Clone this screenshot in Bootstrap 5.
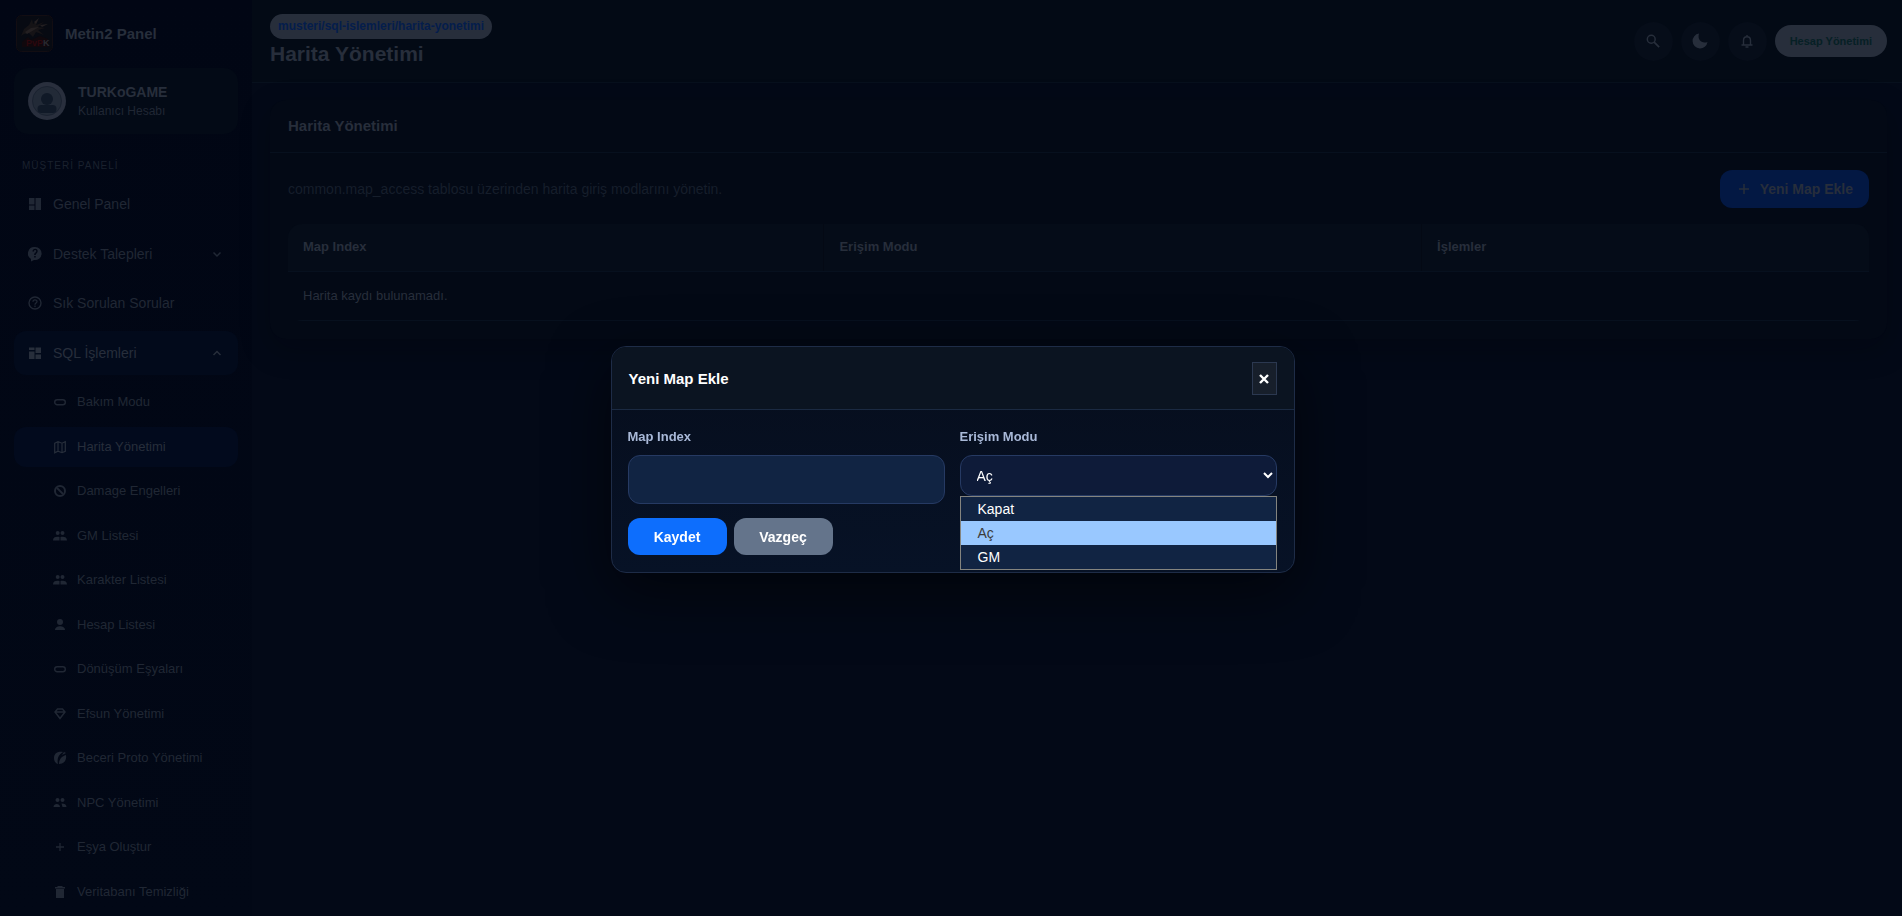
<!DOCTYPE html>
<html lang="tr" data-bs-theme="dark">
<head>
<meta charset="utf-8">
<meta name="viewport" content="width=device-width, initial-scale=1">
<title>Harita Yönetimi - Metin2 Panel</title>
<link href="https://cdn.jsdelivr.net/npm/bootstrap@5.3.0/dist/css/bootstrap.min.css" rel="stylesheet">
<style>
  :root { --ink: #272e3b; --ink-soft: #202734; --ink-faint: #161e2b; --rule: #07101e; }
  body { font-family: "Liberation Sans", Arial, sans-serif; font-size: 14px; line-height: 20px; color: var(--ink); background: #030917; overflow: hidden; }
  svg { display: block; fill: currentColor; }
  a { color: inherit; text-decoration: none; }

  .side-panel { width: 252px; padding: 15px 14px 0; background: linear-gradient(#010614, #020816); }
  .brand-line { height: 37px; margin-bottom: 16px; padding-left: 2px; gap: 12px; font-size: 15px; }
  .user-box { height: 66px; padding: 0 14px; gap: 12px; border-radius: 14px; background: #030a16; }
  .user-box small { font-size: 12px; line-height: 18px; color: var(--ink-soft); }
  .user-name { line-height: 19px; }
  .section-label { margin: 23px 0 7px 8px; font-size: 10px; letter-spacing: 1px; color: #1a212e; line-height: 18px; }
  .menu-list, .sub-list { display: flex; flex-direction: column; list-style: none; margin: 0; padding: 0; }
  .menu-list { gap: 5px; }
  .sub-list { gap: 4px; margin-top: 7px; }
  .menu-list > li:nth-child(even), .sub-list > li:nth-child(even) { padding-top: 1px; }
  .menu-link { display: flex; align-items: center; height: 44px; padding: 0 14px; gap: 11px; border-radius: 12px; color: var(--ink-soft); }
  .menu-link.open { background: #020a1b; color: var(--ink); }
  .sub-link { display: flex; align-items: center; height: 40px; padding: 0 14px 0 39px; gap: 10px; border-radius: 12px; font-size: 13px; color: var(--ink-soft); }
  .sub-link.current { background: #020a1d; color: var(--ink); }

  .top-line { min-height: 83px; padding: 0 15px 0 18px; background: #030a15; border-bottom: 1px solid #07101d; }
  .path-pill { padding: 0 8px; border-radius: 13px; font-size: 12px; line-height: 25px; background: var(--ink); color: #041d4c; }
  .page-title { margin: 2px 0 5px; font-size: 21px; line-height: 26px; font-weight: 700; color: inherit; }
  .tools { gap: 8px; }
  .round-btn { width: 39px; height: 39px; padding: 0; border: 0; border-radius: 50%; background: #060d19; color: var(--ink); }
  .account-btn { height: 32px; padding: 0 15px; border-radius: 16px; font-size: 11px; font-weight: 700; background: var(--ink); color: #062025; }

  .page-area { padding: 17px 15px 0 18px; }
  .map-card { background: #030915; border-radius: 16px; box-shadow: 0 10px 30px rgba(0, 0, 8, .25); }
  .map-card-head { padding: 16px 18px; border-bottom: 1px solid var(--rule); font-size: 15px; font-weight: 700; }
  .map-card-body { padding: 17px 18px 18px; }
  .intro-text { color: var(--ink-faint); }
  .add-btn { height: 38px; padding: 0 16px; gap: 8px; border-radius: 12px; background: #031843; color: var(--ink); font-weight: 700; }
  .map-table-box { margin-top: 16px; border-radius: 14px; overflow: hidden; }
  .map-grid { width: 100%; table-layout: fixed; font-size: 13px; }
  .map-grid th { height: 47px; padding: 0 15px; background: #050c18; border-bottom: 1px solid var(--rule); }
  .map-grid th + th { border-left: 1px solid #040914; }
  .map-grid td { height: 49px; padding: 0 15px; border-bottom: 1px solid var(--rule); }

  .overlay { position: fixed; inset: 0; padding: 3px 0 0 3px; }
  .dialog-box { width: 684px; border: 1px solid #1e2c47; border-radius: 15px; background: linear-gradient(#060d1c, #071226); box-shadow: 0 20px 60px rgba(0, 0, 0, .55); color: #fff; }
  .dialog-head { padding: 15px 17px 14px 17px; background: #0b1421; border-bottom: 1px solid #1b2a42; border-radius: 14px 14px 0 0; }
  .dialog-title { margin: 0; font-size: 15px; line-height: 20px; font-weight: 700; }
  .close-btn { width: 25px; height: 33px; padding: 0; border: 1px solid #2b3850; background: #171f2b; color: #fff; }
  .dialog-body { padding: 17px 17px 17px 16px; }
  .field-row { display: grid; grid-template-columns: 1fr 1fr; gap: 15px; align-items: start; }
  .field-row label { display: block; margin-bottom: 8px; font-size: 13px; font-weight: 700; color: #a9b9d8; }
  .field-row input, .field-row select { display: block; width: 100%; border: 1px solid #263a63; border-radius: 12px; color: #fff; outline: 0; }
  .field-row input { height: 49px; padding: 0 15px; background: #112443; }
  .field-row select { height: 41px; padding: 0 0 0 12px; background: #0e1b39; }
  .choice-list { position: absolute; top: 100%; left: 0; right: 0; margin: 0; padding: 0; list-style: none; background: #112443; border: 1px solid #84847f; }
  .choice-list li { padding: 0 17px; line-height: 24px; }
  .choice-list .picked { background: #99c8ff; color: #3c3c3c; }
  .form-btns { margin-top: 14px; gap: 7px; }
  .form-btns button { width: 99px; height: 37px; padding: 0; border: 0; border-radius: 12px; color: #fff; font-weight: 700; }
  .save-btn { background: #0d6efd; }
  .cancel-btn { background: #64748b; }
</style>
</head>
<body>
<div class="d-flex min-vh-100">
  <aside class="side-panel flex-shrink-0 vh-100 overflow-hidden">
    <a href="#" class="brand-line d-flex align-items-center fw-bold">
      <svg width="37" height="37" viewBox="0 0 37 37" aria-hidden="true">
        <rect x=".5" y=".5" width="36" height="36" rx="5" fill="#070a12" stroke="#120d12"/>
        <path d="M5 21l3-7 5-4 3-6 1 5 5-4-2 5 8-3-6 5 7 1-7 2 6 5-8-3-3 5-4-4-5 1z" fill="#151316"/>
        <path d="M9 17l6-4 8-1-5 3-7 4zM18 7l5-4-3 6zM24 10l8-1-6 3z" fill="#231f21"/>
        <path d="M6 27l6-5 3 3 9-4 8 3v8H6z" fill="#10080d"/>
        <text x="10" y="31" font-size="9" font-weight="700" fill="#2c070d">PvP<tspan fill="#292b32">K</tspan></text>
      </svg>
      <span>Metin2 Panel</span>
    </a>
    <div class="user-box d-flex align-items-center">
      <svg width="38" height="38" viewBox="0 0 38 38" aria-hidden="true">
        <circle cx="19" cy="19" r="19" fill="#292f3d"/><circle cx="19" cy="19" r="14.5" fill="#222a37" stroke="#1a2230"/>
        <circle cx="19" cy="17" r="6" fill="#101927"/><rect x="9.500" y="23" width="19" height="8" rx="4" fill="#101927"/>
      </svg>
      <div class="d-flex flex-column">
        <span class="user-name fw-bold">TURKoGAME</span>
        <small>Kullanıcı Hesabı</small>
      </div>
    </div>
    <div class="section-label">MÜŞTERİ PANELİ</div>
    <nav>
      <ul class="menu-list">
        <li><a href="#" class="menu-link"><svg width="14" height="14" viewBox="0 0 14 14"><path d="M1 1h5.500v6.500H1zM1 8.500h5.500V13H1zM7.500 1H13v12H7.500z"/></svg>Genel Panel</a></li>
        <li><a href="#" class="menu-link"><svg width="14" height="16" viewBox="0 0 14 16"><path fill-rule="evenodd" d="M7 1a6.500 6.500 0 1 1-1 12.900L3 15.500V13A6.500 6.500 0 0 1 7 1zM4.500 5.500H6c0-2 2.300-1.600 2.200-.3C8.200 6.600 6.200 6.500 6.200 9h1.500c0-1.600 2-1.800 2-4C9.600 2 4.500 2 4.500 5.500zM6.200 10v1.500h1.500V10z"/></svg>Destek Talepleri
          <svg class="ms-auto" width="14" height="14" viewBox="0 0 14 14"><path d="M3.500 5.500L7 9l3.500-3.500" fill="none" stroke="currentColor" stroke-width="1.500"/></svg></a></li>
        <li><a href="#" class="menu-link"><svg width="14" height="14" viewBox="0 0 14 14"><circle cx="7" cy="7" r="6" fill="none" stroke="currentColor" stroke-width="1.400"/><path d="M5 5.700C5 3.200 9 3.200 9 5.500 9 7 7 7 7 8.700M7 9.600V11" fill="none" stroke="currentColor" stroke-width="1.300"/></svg>Sık Sorulan Sorular</a></li>
        <li><a href="#" class="menu-link open"><svg width="14" height="14" viewBox="0 0 14 14"><path d="M1 1.500h5.500v2.500H1zM1 5.500h5.500V13H1zM7.500 1.500H13V7H7.500zM7.500 8.500H13V13H7.500z"/></svg>SQL İşlemleri
          <svg class="ms-auto" width="14" height="14" viewBox="0 0 14 14"><path d="M3.500 9L7 5.500 10.500 9" fill="none" stroke="currentColor" stroke-width="1.500"/></svg></a>
          <ul class="sub-list">
            <li><a href="#" class="sub-link"><svg width="14" height="14" viewBox="0 0 14 14"><rect x="1.700" y="4.700" width="10.600" height="5" rx="2.500" fill="none" stroke="currentColor" stroke-width="1.400"/></svg>Bakım Modu</a></li>
            <li><a href="#" class="sub-link current"><svg width="14" height="14" viewBox="0 0 14 14"><path d="M1.700 3.200L5 1.700l4 1.500 3.300-1.500v9.600L9 12.700l-4-1.500-3.300 1.500zM5 1.700v9.500M9 3v9.700" fill="none" stroke="currentColor" stroke-width="1.200"/></svg>Harita Yönetimi</a></li>
            <li><a href="#" class="sub-link"><svg width="14" height="14" viewBox="0 0 14 14"><circle cx="7" cy="7" r="5" fill="none" stroke="currentColor" stroke-width="2"/><path d="M4 4l6 6" stroke="currentColor" stroke-width="1.800"/></svg>Damage Engelleri</a></li>
            <li><a href="#" class="sub-link"><svg width="14" height="14" viewBox="0 0 14 14"><circle cx="4.700" cy="4" r="2"/><circle cx="9.500" cy="4" r="2"/><path d="M0 11.500C0 8 3 7.500 6.500 8v3.500zM7.500 8C11 7.500 14 8 14 11.500H7.500z"/></svg>GM Listesi</a></li>
            <li><a href="#" class="sub-link"><svg width="14" height="14" viewBox="0 0 14 14"><circle cx="4.700" cy="4" r="2"/><circle cx="9.500" cy="4" r="2"/><path d="M0 11.500C0 8 3 7.500 6.500 8v3.500zM7.500 8C11 7.500 14 8 14 11.500H7.500z"/></svg>Karakter Listesi</a></li>
            <li><a href="#" class="sub-link"><svg width="14" height="14" viewBox="0 0 14 14"><circle cx="7" cy="4" r="3"/><path d="M2 12c0-5 10-5 10 0z"/></svg>Hesap Listesi</a></li>
            <li><a href="#" class="sub-link"><svg width="14" height="14" viewBox="0 0 14 14"><rect x="1.700" y="4.700" width="10.600" height="5" rx="2.500" fill="none" stroke="currentColor" stroke-width="1.400"/></svg>Dönüşüm Eşyaları</a></li>
            <li><a href="#" class="sub-link"><svg width="14" height="14" viewBox="0 0 14 14"><path d="M4.500 2h5L12 5l-5 6.500L2 5zM2 5h10" fill="none" stroke="currentColor" stroke-width="1.500"/></svg>Efsun Yönetimi</a></li>
            <li><a href="#" class="sub-link"><svg width="14" height="14" viewBox="0 0 14 14"><path d="M10 1C4 0 1 3 1 7c0 3 1 5 4 6C4 8 5 4 10 1zM13 4C9 5 6 8 6 13c5 0 8-4 7-9zM11 1l2 1-4 2z"/></svg>Beceri Proto Yönetimi</a></li>
            <li><a href="#" class="sub-link"><svg width="14" height="14" viewBox="0 0 14 14"><circle cx="4.500" cy="4" r="2"/><circle cx="9.500" cy="4" r="2"/><path d="M.500 11C.500 7 7 7 7 11zM8.500 7.500c3 0 5 1 5 3.500H9.500z"/></svg>NPC Yönetimi</a></li>
            <li><a href="#" class="sub-link"><svg width="14" height="14" viewBox="0 0 14 14"><path d="M7 3v8M3 7h8" stroke="currentColor" stroke-width="1.300"/></svg>Eşya Oluştur</a></li>
            <li><a href="#" class="sub-link"><svg width="14" height="14" viewBox="0 0 14 14"><path d="M5 1h4l1 1h2v1.500H2V2h2zM3 4h8v9H3z"/></svg>Veritabanı Temizliği</a></li>
          </ul></li>
      </ul>
    </nav>
  </aside>

  <div class="flex-grow-1">
    <header class="top-line d-flex align-items-center justify-content-between">
      <div class="d-flex flex-column align-items-start pt-1">
        <span class="path-pill fw-bold">musteri/sql-islemleri/harita-yonetimi</span>
        <h1 class="page-title">Harita Yönetimi</h1>
      </div>
      <div class="tools d-flex align-items-center">
        <button type="button" class="round-btn d-flex align-items-center justify-content-center" aria-label="Ara"><svg width="14" height="14" viewBox="0 0 16 16"><circle cx="6" cy="6" r="4.500" fill="none" stroke="currentColor" stroke-width="1.700"/><path d="M9 9l6 6" stroke="currentColor" stroke-width="2"/></svg></button>
        <button type="button" class="round-btn d-flex align-items-center justify-content-center" aria-label="Koyu tema"><svg width="16" height="16" viewBox="0 0 16 16"><path d="M7 .500A7.500 7.500 0 1 0 15.500 9C10 11 5 7 7 .500z"/></svg></button>
        <button type="button" class="round-btn d-flex align-items-center justify-content-center" aria-label="Bildirimler"><svg width="14" height="14" viewBox="0 0 14 14"><path d="M3.500 11V6.500C3.500 1.500 10.500 1.500 10.500 6.500V11M1.500 11h11M5.500 13h3M7 1v2" fill="none" stroke="currentColor" stroke-width="1.400"/></svg></button>
        <a href="#" class="account-btn d-flex align-items-center">Hesap Yönetimi</a>
      </div>
    </header>
    <main class="page-area">
      <section class="map-card">
        <div class="map-card-head">Harita Yönetimi</div>
        <div class="map-card-body">
          <div class="d-flex align-items-center justify-content-between">
            <span class="intro-text">common.map_access tablosu üzerinden harita giriş modlarını yönetin.</span>
            <button type="button" class="add-btn border-0 d-flex align-items-center"><svg width="16" height="16" viewBox="0 0 16 16"><path d="M8 3v10M3 8h10" stroke="currentColor" stroke-width="1.500"/></svg>Yeni Map Ekle</button>
          </div>
          <div class="map-table-box">
            <table class="map-grid">
              <colgroup><col style="width:33.9%"><col style="width:37.8%"><col></colgroup>
              <thead><tr><th>Map Index</th><th>Erişim Modu</th><th>İşlemler</th></tr></thead>
              <tbody><tr><td colspan="3">Harita kaydı bulunamadı.</td></tr></tbody>
            </table>
          </div>
        </div>
      </section>
    </main>
  </div>
</div>

<div class="overlay d-flex align-items-center justify-content-center">
  <div class="dialog-box" role="dialog" aria-labelledby="dialogTitle">
    <div class="dialog-head d-flex align-items-center justify-content-between">
      <h2 class="dialog-title" id="dialogTitle">Yeni Map Ekle</h2>
      <button type="button" class="close-btn d-flex align-items-center justify-content-center" aria-label="Kapat"><svg width="10" height="10" viewBox="0 0 10 10"><path d="M1 1l8 8M9 1L1 9" stroke="currentColor" stroke-width="2.400"/></svg></button>
    </div>
    <form class="dialog-body">
      <div class="field-row">
        <div>
          <label for="mapIndex">Map Index</label>
          <input type="text" id="mapIndex">
        </div>
        <div>
          <label for="accessMode">Erişim Modu</label>
          <div class="position-relative">
            <select id="accessMode"><option>Kapat</option><option selected>Aç</option><option>GM</option></select>
            <ul class="choice-list"><li>Kapat</li><li class="picked">Aç</li><li>GM</li></ul>
          </div>
        </div>
      </div>
      <div class="form-btns d-flex">
        <button type="submit" class="save-btn">Kaydet</button>
        <button type="button" class="cancel-btn">Vazgeç</button>
      </div>
    </form>
  </div>
</div>
<script src="https://cdn.jsdelivr.net/npm/bootstrap@5.3.0/dist/js/bootstrap.bundle.min.js"></script>
</body>
</html>
